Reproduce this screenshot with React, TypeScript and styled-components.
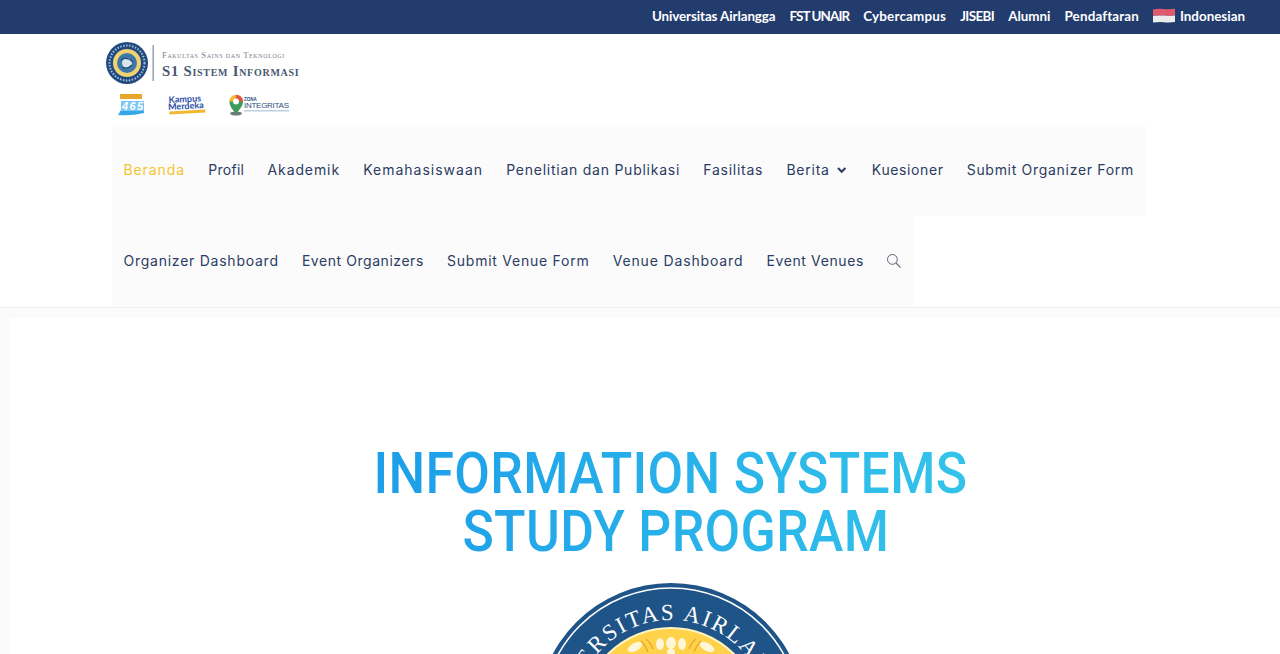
import styled, { createGlobalStyle } from 'styled-components';
import { useId } from 'react';

const GlobalStyle = createGlobalStyle`
  html, body {
    margin: 0;
    height: 654px;
    overflow: hidden;
    background: #ffffff;
  }
`;

const TopBar = styled.div`
  height: 34px;
  background: #233c6e;
  display: flex;
  justify-content: flex-end;
  align-items: center;
  padding: 0 35px 3px 0;
  box-sizing: border-box;
  gap: 14px;
`;

const TopLink = styled.a<{ $tracking?: number }>`
  font-family: 'Lato', sans-serif;
  font-size: 13.4px;
  font-weight: 700;
  letter-spacing: ${(props) => props.$tracking ?? 0}px;
  color: #ffffff;
  display: flex;
  align-items: center;
  gap: 5px;
`;

const Header = styled.header`
  height: 274px;
  border-bottom: 1px solid #f0f0f0;
  box-sizing: border-box;
  padding-left: 106px;
`;

const LogoBlock = styled.div`
  height: 91px;
  padding-top: 8px;
  box-sizing: border-box;
  svg {
    display: block;
  }
`;

const Badges = styled.div`
  display: flex;
  align-items: center;
  margin: 8px 0 0 12px;
  gap: 23px;
`;

const Menu = styled.nav`
  margin-left: 6px;
`;

const MenuRow = styled.div`
  width: fit-content;
  height: 91px;
  background: #fbfbfb;
  display: flex;
  align-items: center;
  padding: 0 11.5px 2px;
  box-sizing: border-box;
  gap: 23.2px;
`;

const MenuItem = styled.a<{ $active?: boolean; $tracking?: number }>`
  font-family: 'Inter', sans-serif;
  font-size: 14px;
  font-weight: 400;
  letter-spacing: ${(props) => props.$tracking ?? 0.75}px;
  white-space: nowrap;
  color: ${(props) => (props.$active ? '#f5c530' : '#2c3c63')};
  display: flex;
  align-items: center;
  gap: 5px;
`;

const Stage = styled.main`
  background: #fbfbfb;
  height: 346px;
  padding: 10px 0 0 10px;
  box-sizing: border-box;
`;

const Poster = styled.div`
  background: #ffffff;
  height: 336px;
  overflow: hidden;
  display: flex;
  flex-direction: column;
  align-items: center;
  padding-top: 127px;
  padding-left: 50px;
  box-sizing: border-box;
`;

const PosterTitle = styled.h1`
  margin: 0;
  font-family: 'Roboto', sans-serif;
  font-size: 57px;
  line-height: 58px;
  font-weight: 500;
  letter-spacing: 0.4px;
  text-align: center;
  white-space: nowrap;
  transform: scaleX(0.907);
  background: linear-gradient(90deg, #1d9ee9, #33c3ea);
  -webkit-background-clip: text;
  background-clip: text;
  color: transparent;
`;

const TitleLine = styled.span<{ $indent?: number }>`
  display: block;
  padding-left: ${(props) => props.$indent ?? 0}px;
`;

const SealWrap = styled.div`
  margin: 22px 0 0 2px;
  flex: none;
`;

function Flag() {
  return (
    <svg width="22" height="15" viewBox="0 0 22 15">
      <path d="M0 1.4 Q5.5 0.4 11 1 T22 0.8 V7.6 Q16 8.2 11 7.6 T0 8Z" fill="#df5a6c" />
      <path d="M0 8 Q5.5 7 11 7.6 T22 7.6 V14 Q16 14.8 11 14.2 T0 14.6Z" fill="#ececec" />
    </svg>
  );
}

function Chevron() {
  return (
    <svg width="14" height="12" viewBox="0 0 14 12">
      <path d="M3 4 6.7 7.8 10.4 4" fill="none" stroke="#2c3c63" strokeWidth="2" />
    </svg>
  );
}

function SearchIcon() {
  return (
    <svg width="14" height="14" viewBox="1 0.8 14 14">
      <circle cx="6.4" cy="6.2" r="4.9" fill="none" stroke="#5a6478" strokeWidth="1" />
      <path d="M10 9.8 14.6 14.4" stroke="#5a6478" strokeWidth="1.1" />
    </svg>
  );
}

function FacultyLogo() {
  return (
    <svg width="200" height="44" viewBox="0 0 200 44">
      <circle cx="21" cy="21" r="21" fill="#1f4a80" />
      <circle cx="21" cy="21" r="17.5" fill="none" stroke="#a9bdd4" strokeWidth="2" strokeDasharray="1.5 1.5" />
      <circle cx="21" cy="21" r="14" fill="#f0d271" />
      <circle cx="21" cy="21" r="10" fill="#3e78a8" />
      <circle cx="21" cy="21" r="5" fill="#d9e4ec" />
      <path d="M15 18 Q21 14 27 20 M16 25 Q21 28 26 23" fill="none" stroke="#1f4a80" strokeWidth="1.4" />
      <rect x="46.5" y="3" width="1.4" height="36" fill="#8d9ab3" />
      <text
        x="56"
        y="16"
        fontFamily="'Liberation Serif', serif"
        fontSize="8.6"
        fill="#77808f"
        letterSpacing="0.6"
        style={{ fontVariant: 'small-caps' }}
      >
        Fakultas Sains dan Teknologi
      </text>
      <text
        x="56"
        y="34"
        fontFamily="'Liberation Serif', serif"
        fontSize="14.8"
        fontWeight="700"
        fill="#4a5873"
        letterSpacing="0.72"
        style={{ fontVariant: 'small-caps' }}
      >
        S1 Sistem Informasi
      </text>
    </svg>
  );
}

function AgeBadge() {
  return (
    <svg width="27" height="22" viewBox="0 0 27 22">
      <rect x="2" y="0" width="22" height="5" fill="#e5a72c" />
      <path d="M0 21 L3 16 H26 V19 Q14 22 0 21Z" fill="#35a6ea" />
      <rect x="3" y="7" width="23" height="10" fill="#7cc6f2" />
      <text x="4" y="16" fontFamily="'Liberation Sans', sans-serif" fontSize="11" fontWeight="700" fontStyle="italic" fill="#ffffff" textLength="21">
        465
      </text>
    </svg>
  );
}

function MerdekaBadge() {
  return (
    <svg width="38" height="20" viewBox="0 0 38 20">
      <g transform="rotate(-3 19 10)">
        <text x="1" y="7" fontFamily="'Lato', sans-serif" fontSize="9" fontWeight="700" fill="#2b4fa8">
          Kampus
        </text>
        <text x="0" y="14" fontFamily="'Lato', sans-serif" fontSize="9" fontWeight="700" fill="#2b4fa8">
          Merdeka
        </text>
        <rect x="1" y="15.5" width="36" height="3" fill="#f2b733" />
      </g>
    </svg>
  );
}

function IntegritasBadge() {
  return (
    <svg width="62" height="22" viewBox="0 0 62 22">
      <ellipse cx="7" cy="19.5" rx="6" ry="2" fill="#6d7a78" />
      <path d="M7 20 C3 15 0.5 12 0.5 7.5 A6.8 6.8 0 0 1 14 7.5 C14 12 11 15 7 20Z" fill="#3f9b5b" />
      <path d="M7 0.7 A6.8 6.8 0 0 1 14 7.5 L7 7.5Z" fill="#e2543f" />
      <path d="M0.5 7.5 A6.8 6.8 0 0 1 7 0.7 L7 7.5Z" fill="#f2b733" />
      <circle cx="7" cy="7.5" r="3" fill="#ffffff" />
      <text x="15" y="6.6" fontFamily="'Liberation Sans', sans-serif" fontSize="4.5" fontWeight="700" fill="#2a4f7c">
        ZONA
      </text>
      <text x="15" y="14" fontFamily="'Liberation Sans', sans-serif" fontSize="8" fill="#2a4f7c" textLength="45">
        INTEGRITAS
      </text>
      <rect x="15" y="16" width="45" height="1.5" fill="#bcd0e0" />
    </svg>
  );
}

function Seal() {
  const arcId = useId();
  return (
    <svg width="268" height="268" viewBox="0 0 268 268">
      <circle cx="134" cy="134" r="134" fill="#1f5488" />
      <circle cx="134" cy="134" r="129" fill="none" stroke="#ffffff" strokeWidth="1.6" />
      <circle cx="134" cy="134" r="89" fill="#ffd24a" stroke="#fff3c0" strokeWidth="2" />
      <path id={arcId} d="M 134 231 A 97 97 0 1 1 134.01 231" fill="none" />
      <text fontFamily="'Liberation Serif', serif" fontSize="23" fill="#ffffff" letterSpacing="2">
        <textPath href={`#${arcId}`} startOffset="50%" textAnchor="middle">
          UNIVERSITAS AIRLANGGA
        </textPath>
      </text>
      <g transform="translate(-4 0)">
        <g fill="#fff6d8">
          <ellipse cx="138" cy="60" rx="5" ry="6" />
          <ellipse cx="127" cy="61" rx="4" ry="6" />
          <ellipse cx="149" cy="61" rx="4" ry="6" />
          <ellipse cx="138" cy="69" rx="4" ry="3.5" />
          <ellipse cx="102" cy="64" rx="8" ry="4" transform="rotate(-28 102 64)" />
          <ellipse cx="174" cy="64" rx="8" ry="4" transform="rotate(28 174 64)" />
        </g>
        <g stroke="#e8a92a" strokeWidth="1.4" fill="none">
          <path d="M113 56 Q118 60 120 66" />
          <path d="M108 58 Q113 63 115 69" />
          <path d="M163 56 Q158 60 156 66" />
          <path d="M168 58 Q163 63 161 69" />
        </g>
      </g>
    </svg>
  );
}

export default function App() {
  return (
    <>
      <GlobalStyle />
      <TopBar>
        <TopLink $tracking={-0.1}>Universitas Airlangga</TopLink>
        <TopLink $tracking={-0.9}>FST UNAIR</TopLink>
        <TopLink $tracking={0.2}>Cybercampus</TopLink>
        <TopLink $tracking={-0.6}>JISEBI</TopLink>
        <TopLink>Alumni</TopLink>
        <TopLink $tracking={0.15}>Pendaftaran</TopLink>
        <TopLink>
          <Flag />
          Indonesian
        </TopLink>
      </TopBar>
      <Header>
        <LogoBlock>
          <FacultyLogo />
          <Badges>
            <AgeBadge />
            <MerdekaBadge />
            <IntegritasBadge />
          </Badges>
        </LogoBlock>
        <Menu>
          <MenuRow>
            <MenuItem $active $tracking={0.9}>Beranda</MenuItem>
            <MenuItem $tracking={0.3}>Profil</MenuItem>
            <MenuItem $tracking={0.9}>Akademik</MenuItem>
            <MenuItem $tracking={1}>Kemahasiswaan</MenuItem>
            <MenuItem>Penelitian dan Publikasi</MenuItem>
            <MenuItem>Fasilitas</MenuItem>
            <MenuItem>
              Berita
              <Chevron />
            </MenuItem>
            <MenuItem $tracking={0.6}>Kuesioner</MenuItem>
            <MenuItem $tracking={0.7}>Submit Organizer Form</MenuItem>
          </MenuRow>
          <MenuRow>
            <MenuItem>Organizer Dashboard</MenuItem>
            <MenuItem $tracking={0.55}>Event Organizers</MenuItem>
            <MenuItem>Submit Venue Form</MenuItem>
            <MenuItem $tracking={0.85}>Venue Dashboard</MenuItem>
            <MenuItem $tracking={0.6}>Event Venues</MenuItem>
            <MenuItem>
              <SearchIcon />
            </MenuItem>
          </MenuRow>
        </Menu>
      </Header>
      <Stage>
        <Poster>
          <PosterTitle>
            <TitleLine>INFORMATION SYSTEMS</TitleLine>
            <TitleLine $indent={12}>STUDY PROGRAM</TitleLine>
          </PosterTitle>
          <SealWrap>
            <Seal />
          </SealWrap>
        </Poster>
      </Stage>
    </>
  );
}
